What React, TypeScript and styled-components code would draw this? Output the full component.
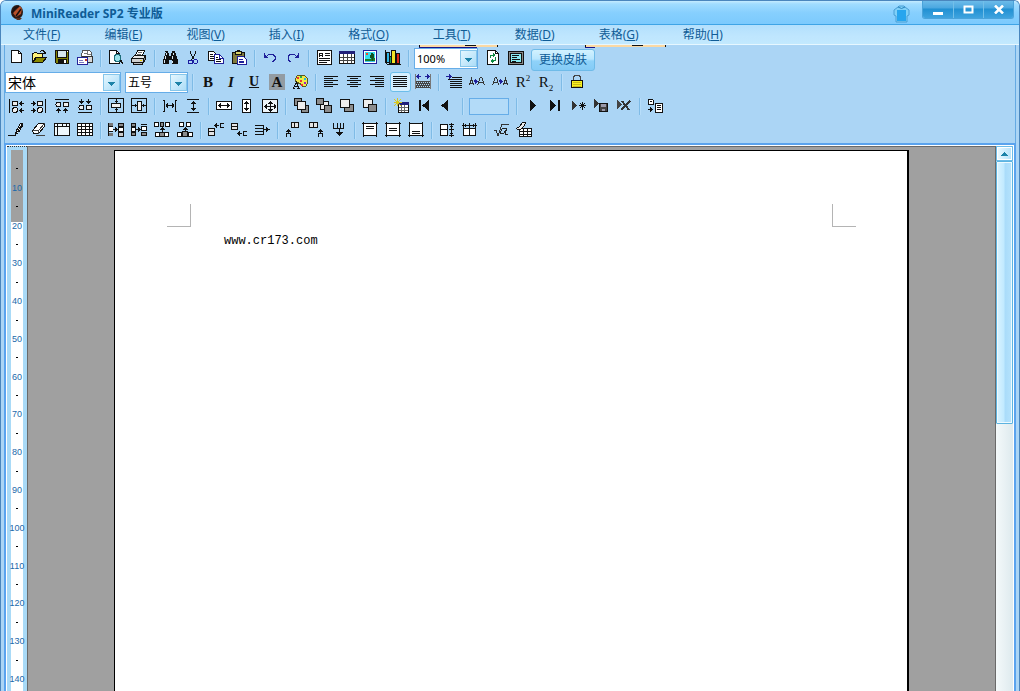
import React from "react";
import styled, { createGlobalStyle, css } from "styled-components";

const ui = `"Noto Sans", "Noto Sans CJK SC", sans-serif`;
const ink = "#0f5c96";

const GlobalStyle = createGlobalStyle`
  *, *::before, *::after { box-sizing: border-box; }
  body { margin: 0; font-family: ${ui}; font-size: 12px; }
  button, select, input { font: inherit; margin: 0; padding: 0; }
`;

/* ---------- window chrome ---------- */

const Window = styled.div`
  display: flex;
  flex-direction: column;
  height: 100vh;
  overflow: hidden;
  background: #abd5f5;
  border: solid #4a86bd;
  border-width: 1px 1px 0;
  border-radius: 6px 6px 0 0;
`;

const TitleBar = styled.header`
  display: flex;
  align-items: flex-start;
  flex: none;
  height: 24px;
  padding: 0 5px 0 8px;
  background: linear-gradient(#c4ebff 0, #a0dcff 3px, #86cffe 12px, #7ccafd 100%);
  border-bottom: 1px solid #3fa4e6;
`;

const AppTitle = styled.h1`
  flex: 1;
  margin: 0 0 0 6px;
  font-size: 12px;
  line-height: 25px;
  font-weight: 700;
  color: ${ink};
`;

const SkinButton = styled.button`
  width: 17px;
  height: 20px;
  margin: 3px 12px 0 0;
  border: 0;
  background: none;
  svg { display: block; }
`;

const WindowButtons = styled.div`
  display: flex;
  height: 18px;
  border: 1px solid #4aa3da;
  border-top: 0;
  border-radius: 0 0 3px 3px;
  overflow: hidden;
`;

const WindowButton = styled.button`
  display: flex;
  align-items: center;
  justify-content: center;
  width: 30px;
  border: 0;
  border-left: 1px solid #73bfe8;
  background: linear-gradient(#6cbbe9 0, #4aa7e0 7px, #2190d2 8px, #3ea3df 100%);
  &:first-child { border-left: 0; }
`;

const MenuBar = styled.nav`
  display: flex;
  flex: none;
  gap: 44px;
  height: 20px;
  padding-left: 22px;
  background: linear-gradient(#b3e0fd, #bfe6fe 60%, #c2e9fe);
  border-bottom: 1px solid #e6f7ff;
`;

const MenuItem = styled.button`
  border: 0;
  background: none;
  color: ${ink};
  font-size: 12px;
  line-height: 20px;
  white-space: nowrap;
`;

/* ---------- toolbars ---------- */

const Toolbars = styled.div`
  position: relative;
  flex: none;
  margin: 0 3px;
  padding: 1px 0;
  border: solid #65aae3;
  border-width: 0 1px;
`;

const MenuShadow = styled.svg`
  position: absolute;
  left: 414px;
  top: 0;
`;

const ToolRow = styled.div`
  display: flex;
  align-items: center;
  height: 24px;
`;

const ToolButton = styled.button<{ $on?: boolean }>`
  display: flex;
  align-items: center;
  justify-content: center;
  flex: none;
  width: 23px;
  height: 20px;
  padding: 0 1px 0 0;
  border: 0;
  background: none;
  ${(p) =>
    p.$on &&
    css`
      background: #d5effe;
      box-shadow: inset 0 0 0 1px #6cbdea;
      border-radius: 3px;
      width: 21px;
      margin: 0 1px;
    `}
`;

const Divider = styled.span`
  flex: none;
  width: 2px;
  height: 17px;
  margin: 0 3px;
  background: #7fbbe6;
  border-right: 1px solid #b8defa;
`;

const Combo = styled.label<{ $width: number; $size: number }>`
  position: relative;
  flex: none;
  width: ${(p) => p.$width}px;
  height: 21px;
  margin-right: 4px;
  ${Divider} + & { margin-left: 1px; }
  & + & { margin: 0 1px 0 0; }
  select {
    appearance: none;
    display: block;
    width: 100%;
    height: 100%;
    padding-left: 2px;
    border: 1px solid #66ade8;
    border-radius: 0;
    background: #fff;
    color: #000;
    font-size: ${(p) => p.$size}px;
    line-height: 19px;
  }
`;

const ComboArrow = styled.svg`
  position: absolute;
  right: 1px;
  top: 2px;
  pointer-events: none;
`;

const RecordField = styled.input`
  width: 40px;
  height: 17px;
  margin: 0 4px 0 2px;
  border: 1px solid #66ade8;
  background: #b3dbf8;
`;

const SwapSkin = styled.button`
  width: 64px;
  height: 22px;
  margin: 3px 0 0 3px;
  border: 1px solid #6fbbe8;
  border-radius: 3px;
  background: linear-gradient(#d2f2ff 0, #b9e6fe 45%, #8fd2f9 55%, #84cbf6 100%);
  color: #0f5c96;
  font-size: 12px;
  line-height: 20px;
`;

const Letter = styled.span<{
  $size: number;
  $bold?: boolean;
  $italic?: boolean;
  $underline?: boolean;
  $shaded?: boolean;
}>`
  font-family: "Liberation Serif", serif;
  font-size: ${(p) => p.$size}px;
  line-height: 16px;
  font-weight: ${(p) => (p.$bold ? 700 : 400)};
  font-style: ${(p) => (p.$italic ? "italic" : "normal")};
  text-decoration: ${(p) => (p.$underline ? "underline" : "none")};
  color: #111;
  white-space: nowrap;
  ${(p) =>
    p.$shaded &&
    css`
      width: 16px;
      text-align: center;
      background: #939ca3;
    `}
  sup, sub { font-size: 9px; line-height: 0; }
`;

/* ---------- workspace ---------- */

const Frame = styled.main`
  display: flex;
  flex: 1;
  min-height: 0;
  margin: 0 3px;
  border: solid #5aa3ee;
  border-width: 2px 2px 0;
`;

const Inner = styled.div`
  display: flex;
  flex: 1;
  min-width: 0;
  border: solid #fff;
  border-width: 1px 1px 0;
`;

const Ruler = styled.aside`
  flex: none;
  width: 20px;
  overflow: hidden;
  padding: 3px 4px 0;
  background: #a9daf7;
  border-top: 1px dotted #333;
`;

const RulerScale = styled.div`
  height: 297mm;
  padding-top: calc(5mm / 2);
  background: linear-gradient(#a0a0a0 72px, #fff 72px);
`;

const Tick = styled.div`
  display: flex;
  align-items: center;
  justify-content: center;
  height: 5mm;
  font-family: "Liberation Sans", sans-serif;
  font-size: 9px;
  color: #1b69ab;
`;

const Dash = styled.i`
  width: 2px;
  height: 1px;
  background: #000;
`;

const Desk = styled.section`
  flex: 1;
  min-width: 0;
  overflow: hidden;
  padding-top: 3px;
  background: #a0a0a0;
  border: solid #6a6a6a;
  border-width: 1px 1px 0;
`;

const Paper = styled.article`
  width: 795px;
  height: 297mm;
  margin: 0 auto;
  background: #fff;
  border: 1px solid #000;
  border-right-width: 2px;
`;

const Margins = styled.div`
  display: flex;
  justify-content: space-between;
  padding: 53px 51px 0 52px;
`;

const Corner = styled.span<{ $side: "left" | "right" }>`
  width: 24px;
  height: 23px;
  border-bottom: 1px solid #b4b4b4;
  ${(p) => (p.$side === "left" ? "border-right" : "border-left")}: 1px solid #b4b4b4;
`;

const Body = styled.p`
  margin: 6px 109px;
  font-family: "Liberation Mono", monospace;
  font-size: 12px;
  line-height: 16px;
  color: #000;
`;

const ScrollBar = styled.div`
  display: flex;
  flex-direction: column;
  flex: none;
  width: 17px;
  background: linear-gradient(90deg, #f4f9fa, #deeaee);
`;

const ScrollUp = styled.button`
  display: flex;
  align-items: center;
  justify-content: center;
  height: 15px;
  border: 1px solid #6cbce8;
  background: linear-gradient(90deg, #eefaff, #b4e2fa);
  box-shadow: inset 0 0 0 1px #fff;
`;

const ScrollThumb = styled.div`
  height: 263px;
  border: 1px solid #5cb3e0;
  border-radius: 1px;
  background: linear-gradient(90deg, #d9f3ff 0, #c2eaff 45%, #aadcfa 55%, #b5e3fd 100%);
  box-shadow: inset 0 0 0 1px #eefaff;
`;

/* ---------- icons, drawn on a 16 x 16 pixel grid ---------- */

const L = ({ d, s = "#111" }: { d: string; s?: string }) => <path d={d} fill="none" stroke={s} />;
const F = ({ d, f = "#111" }: { d: string; f?: string }) => <path d={d} fill={f} />;
const B = ({ d, f = "#fff", s = "#111" }: { d: string; f?: string; s?: string }) => (
  <path d={d} fill={f} stroke={s} />
);

const ARL = (x: number, y: number) => `M${x} ${y}h1v-1h1v-1h1v2h2v1h-2v2h-1v-1h-1v-1h-1z`;
const ARR = (x: number, y: number) => `M${x} ${y}h2v-2h1v1h1v1h1v1h-1v1h-1v1h-1v-2h-2z`;
const ARU = (x: number, y: number) => `M${x} ${y}v1h-1v1h-1v1h2v2h1v-2h2v-1h-1v-1h-1v-1z`;
const ARD = (x: number, y: number) => `M${x} ${y}v2h-2v1h1v1h1v1h1v-1h1v-1h1v-1h-2v-2z`;
const PLAY = (x: number, y: number, h = 5) => `M${x} ${y - h}l${h + 1} ${h + 0.5}l-${h + 1} ${h + 0.5}z`;
const blocks = "#8c8c8c";

const icons: Record<string, React.ReactNode> = {
  newDoc: <><B d="M3.5 .5h7l3 3v9h-10z" /><L d="M10.5 .5v3h3" /></>,
  open: <><B d="M1.5 12.5v-9h1l1-1h2l1 1h5v4h-7z" f="#fdf37a" /><B d="M1.5 12.5l4-5h10l-4 5z" f="#8a8a00" /><L d="M9 1.5l2-1h1l2 2v1M11.5 3.5h3v-2" /></>,
  save: <><B d="M1.5 .5h13v13h-12l-1-1z" f="#808000" /><F d="M4 1h9v6h-9z" f="#d6e6ee" /><L d="M3.5 1v6.5h9v-6.5" /><F d="M4 9h9v5h-9z" /><F d="M10 10h2v3h-2z" f="#fff" /><F d="M13 1h1v1h-1z" f="#fff" /></>,
  mail: <><B d="M4.5 5.5l1-5h7l2 2v7h-9z" s="#555" /><L d="M10.5 1v3h3M7 3.5h3" s="#777" /><B d="M5.5 6.5h10v6h-10z" f="#d9d9d9" s="#333" /><B d="M.5 7.5h10v7h-10z" s="#26269a" /><L d="M2 10.5h4M2 12.5h5" s="#7a7ac0" /><F d="M8 9h2v2h-2z" f="#c0392b" /></>,
  preview: <><B d="M1.5 .5h7l3 3v10h-10z" /><L d="M8.5 .5v3h3" /><circle cx="9.5" cy="8" r="3.5" fill="#9be3ea" stroke="#1c6c78" /><L d="M12 10.5l3 3.5M12.5 10l3 3.5" /></>,
  print: <><B d="M4.5 5.5l2-5h7l-2 5z" /><L d="M7 2.5h4M6 4.5h4" s="#666" /><B d="M.5 8.5l3-3h11l-2 3z" f="#e8e8e8" /><B d="M.5 8.5h12v4h-12z" f="#d0d0d0" /><B d="M12.5 8.5l2-3v4l-2 3z" f="#888" /><F d="M9 10h2v1h-2z" f="#e4d000" /><B d="M2.5 12.5h9v2h-9z" f="#bbb" /></>,
  find: <><F d="M3 1h3v2h1v3h2v-3h1v-2h3v2h1v3h1v3h1v5h-6v-4h-3v4h-6v-5h1v-3h1v-3h1z" /><L d="M4.5 3v2M3.5 6v3M2.5 10v3M11.5 3v2M10.5 6v3M10.5 11v2" s="#d9e8f2" /></>,
  cut: <><L d="M5.5 1v2l1 2 1 2 2 3M10.5 1v2l-1 2-1 2-2 3" /><circle cx="5.5" cy="12" r="2" fill="none" stroke="#1c1ca0" /><circle cx="10.5" cy="11.5" r="2" fill="none" stroke="#1c1ca0" /></>,
  copy: <><B d="M.5 1.5h5l3 3v6h-8z" /><L d="M2 4.5h3M2 6.5h5M2 8.5h5" /><B d="M6.5 4.5h5l4 4v5h-9z" s="#20209a" /><L d="M11.5 4.5v4h4" s="#20209a" /><L d="M8 7.5h2M8 9.5h5M8 11.5h5" /></>,
  paste: <><B d="M1.5 2.5h12v11h-12z" f="#807a3c" /><B d="M4.5 1.5h6v3h-6z" f="#d8d16a" /><F d="M6 0h3v2h-3z" /><B d="M6.5 6.5h6l3 3v5h-9z" s="#20209a" /><L d="M8 9.5h4M8 11.5h5M8 12.5h5" s="#20209a" /></>,
  undo: <><L d="M4 6.5l3-2h4l2 2v3l-2 2h-1" s="#20209a" /><F d="M2 3h1v2h1v1h1v1h1v1h-4z" f="#20209a" /></>,
  redo: <><L d="M12 6.5l-3-2h-4l-2 2v3l2 2h1" s="#20209a" /><F d="M14 3h-1v2h-1v1h-1v1h-1v1h4z" f="#20209a" /></>,
  textFrame: <><B d="M1.5 .5h14v14h-14z" /><L d="M3.5 7v-3l1-1h1l1 1v3M4 5.5h3M9 3.5h5M9 5.5h5M3 8.5h11M3 10.5h11M3 12.5h8" /></>,
  table: <><B d="M.5 1.5h15v12h-15z" /><F d="M0 1h16v3h-16z" f="#20207a" /><L d="M1 7.5h14M1 10.5h14M4.5 4v9M8.5 4v9M12.5 4v9" s="#444" /></>,
  picture: <><B d="M1.5 .5h13v13h-13z" s="#20209a" /><F d="M3 2h10v10h-10z" f="#35dcec" /><F d="M3 9h4l3-1h3v4h-10z" f="#187a28" /><F d="M9 3h2v1h1v4h-1v3h-1v-3h-2v-3h1z" f="#0f5120" /><F d="M4 3h2v2h-2z" f="#f04028" /><L d="M3 11.5h10" s="#40c8f0" /></>,
  chart: <><B d="M1.5 2.5h3v10h-3z" f="#2fb6e8" /><B d="M4.5 6.5h2v7h-2z" f="#18a058" /><B d="M6.5 .5h4v13h-4z" f="#f2e326" /><B d="M11.5 3.5h3v10h-3z" f="#e02818" /><L d="M.5 0v12.5l2 2h13" /></>,
  refresh: <><B d="M2.5 .5h8l3 3v11h-11z" /><L d="M10.5 .5v3h3" /><L d="M5.5 8v-2l2-1h2M10.5 7v3l-2 1h-2" s="#0f8a42" /><F d="M8 3l3 2-3 2zM8 9l-3 2 3 2z" f="#0f8a42" /></>,
  fullScreen: <><B d="M.5 1.5h15v13h-15z" f="#888" /><B d="M2.5 3.5h11v9h-11z" f="#8ae9f2" /><L d="M4 5.5h7M4 7.5h5M4 9.5h8M4 11.5h4" /></>,
  palette: <><B d="M3.5 7.5v-3l2-3h7l3 3v5l-2 3h-3l-1-2-2-1z" f="#f2ea4a" s="#5a5620" /><F d="M5 3h2v2h-2zM9 10h2v2h-2z" f="#e33" /><F d="M8 2h2v2h-2z" f="#2aa84a" /><F d="M12 4h2v2h-2z" f="#28b8e0" /><F d="M12 8h2v2h-2z" f="#a020c0" /><F d="M8 6h2v2h-2z" f="#e33" /><L d="M.5 14.5h2M1.5 14l3-6 2 6M3 12.5h3M5 14.5h3" /></>,
  alignLeft: <L d="M1 2.5h14M1 4.5h9M1 6.5h14M1 8.5h9M1 10.5h14M1 12.5h9" />,
  alignCenter: <L d="M1 2.5h14M4 4.5h8M1 6.5h14M4 8.5h8M1 10.5h14M4 12.5h8" />,
  alignRight: <L d="M1 2.5h14M6 4.5h9M1 6.5h14M6 8.5h9M1 10.5h14M6 12.5h9" />,
  justify: <L d="M1 2.5h14M1 4.5h14M1 6.5h14M1 8.5h14M1 10.5h14M1 12.5h14" />,
  distribute: <><L d="M.5 0v15M15.5 0v15" s="#777" /><L d="M1 7.5h14M1 9.5h14M1 11.5h14M1 13.5h14" s="#444" /><path d="M1 8.5h14M2 10.5h13M1 12.5h14" stroke="#444" strokeDasharray="1 1" /><L d="M2 2.5h4M10 2.5h4" s="#20209a" /><F d="M1 2.5l3-2.5v5zM15 2.5l-3-2.5v5z" f="#20209a" /></>,
  indent: <><L d="M6 3.5h10M2 5.5h14M4 7.5h12M4 9.5h12M4 11.5h12M4 13.5h12" /><F d="M0 2h3v-2l3 2.5-3 2.5v-2h-3z" f="#20209a" /></>,
  growFont: <><L d="M.5 11l2-6 2 6M1 9.5h3M8.5 11l3-8h1l3 8M10 8.5h4" s="#333" /><F d="M5 6h1v-1l3 2.5-3 2.5v-2h-1z" f="#20209a" /></>,
  shrinkFont: <><L d="M.5 11l3-8h1l2 8M2 8.5h4M11.5 11l2-6 2 6M12 9.5h3" s="#333" /><F d="M7 6h1v-1l3 2.5-3 2.5v-2h-1z" f="#20209a" /></>,
  lock: <><L d="M4.5 7v-4l2-2h3l2 2v4" s="#444" /><B d="M2.5 6.5h11v7h-11z" f="#f8f020" /><L d="M4 8.5h8M4 10.5h8M4 12.5h8" s="#c8bc18" /></>,

  groupLeft: <><L d="M1.5 1v14" /><B d="M4.5 3.5h5v4h-5z" f="#eee" /><circle cx="7" cy="12" r="2.5" fill="#eee" stroke="#111" /><F d={ARL(11, 5)} /><F d={ARL(11, 12)} /></>,
  groupRight: <><L d="M14.5 1v14" /><B d="M6.5 3.5h5v4h-5z" f="#eee" /><circle cx="9" cy="12" r="2.5" fill="#eee" stroke="#111" /><F d={ARR(0, 5)} /><F d={ARR(0, 12)} /></>,
  groupTop: <><L d="M1 1.5h14" /><circle cx="4.5" cy="6.5" r="2.5" fill="#eee" stroke="#111" /><B d="M9.5 4.5h5v4h-5z" f="#eee" /><F d={ARU(4, 10)} /><F d={ARU(11, 10)} /></>,
  groupBottom: <><L d="M1 14.5h14" /><circle cx="4.5" cy="9.5" r="2.5" fill="#eee" stroke="#111" /><B d="M9.5 7.5h5v4h-5z" f="#eee" /><F d={ARD(4, 1)} /><F d={ARD(11, 1)} /></>,
  midVertical: <><L d="M.5 .5h15v14h-15z" /><B d="M3.5 5.5h9v4h-9z" f="#eee" /><F d="M8 1h1v4h-1zM8 10h1v4h-1zM7 3h3v1h-3zM7 11h3v1h-3z" /></>,
  midHorizontal: <><L d="M.5 .5h15v14h-15z" /><B d="M6.5 3.5h4v9h-4z" f="#eee" /><F d="M1 7h5v1h-5zM11 7h4v1h-4zM4 6h1v3h-1zM12 6h1v3h-1z" /></>,
  gapH: <><L d="M1 2.5h1.5v11h-1.5M15 2.5h-1.5v11h1.5" /><L d="M4 7.5h8M5.5 5v5M4.5 6v3M10.5 5v5M11.5 6v3" /></>,
  gapV: <L d="M2 1.5h12M2 14.5h12M8.5 3v10M7 4.5h3M6 5.5h5M6 10.5h5M7 11.5h3" />,
  sameW: <><B d="M.5 3.5h15v8h-15z" /><L d="M2 7.5h12M4.5 5v5M11.5 5v5M3.5 6v3M12.5 6v3" /></>,
  sameH: <><B d="M3.5 1.5h8v13h-8z" /><L d="M7.5 3v10M5 5.5h5M6 4.5h3M5 10.5h5M6 11.5h3" /></>,
  sameWH: <><B d="M.5 1.5h15v13h-15z" f="#eef4f8" /><L d="M2 8.5h12M8.5 3v11M3.5 7v3M4.5 6v5M13.5 7v3M12.5 6v5M7 4.5h3M6 5.5h5M7 12.5h3M6 11.5h5" /></>,
  toFront: <><B d="M1.5 .5h7v7h-7z" f={blocks} /><B d="M8.5 7.5h7v7h-7z" f={blocks} /><B d="M4.5 3.5h8v8h-8z" f="#eee" /></>,
  toBack: <><B d="M4.5 3.5h8v8h-8z" f="#eee" /><B d="M.5 .5h7v6h-7z" f={blocks} /><B d="M8.5 7.5h7v7h-7z" f={blocks} /></>,
  forward: <><B d="M5.5 6.5h9v7h-9z" f={blocks} /><B d="M1.5 1.5h9v8h-9z" f="#eee" /></>,
  backward: <><B d="M1.5 1.5h9v8h-9z" f="#eee" /><B d="M6.5 6.5h8v7h-8z" f={blocks} /></>,
  newData: <><B d="M5.5 5.5h10v9h-10z" /><F d="M5 4h11v3h-11z" f="#20207a" /><L d="M6 9.5h9M6 12.5h9M8.5 7v7M11.5 7v7" s="#666" /><L d="M4.5 0v8M.5 4.5h8M1 1l7 7M8 1l-7 7" s="#d8c820" /></>,
  first: <><F d="M3 2h2v11h-2z" /><F d="M13 2v11l-7-5.5z" /></>,
  prev: <F d="M9 2v11l-7-5.5z" />,
  next: <F d={PLAY(6, 7, 5)} />,
  last: <><F d={PLAY(3, 7, 5)} /><F d="M11 2h2v11h-2z" /></>,
  addRec: <><F d={PLAY(2, 7, 4)} f="#333" /><L d="M12.5 4v8M8.5 7.5h8M10 5l5 5M15 5l-5 5" /></>,
  saveRec: <><F d={PLAY(1, 5, 4)} f="#333" /><B d="M6.5 5.5h8v8h-8z" f="#444" /><F d="M8 6h5v3h-5zM9 11h3v2h-3z" f="#99a" /></>,
  cancelRec: <><F d={PLAY(1, 6, 4)} f="#444" /><path d="M5 12l9-9M6 3l7 9" stroke="#333" strokeWidth="2" fill="none" /></>,
  exportRec: <><B d="M1.5 1.5h4l1 1v4h-5z" /><L d="M3 3.5h2" /><B d="M8.5 5.5h7v9h-7z" /><L d="M10 7.5h4M10 9.5h4M10 11.5h4" /><F d={ARR(1, 11)} /></>,

  pen: <><B d="M8.5 8.5l4-7h2v2l-4 7-3 2z" f="#f4f4f4" /><L d="M13.5 1v2l-4 7" /><L d="M0 13.5h7l1-2" /></>,
  eraser: <><B d="M1.5 8.5l6-7h6v3l-6 7h-5z" /><L d="M1.5 8.5h6l6-7M7.5 8.5v3M5 13.5h9" s="#444" /></>,
  frameTable: <><B d="M.5 1.5h15v12h-15z" f="#eef7fc" /><L d="M1 4.5h14M3.5 2v11M8.5 2v2M12.5 2v2" /></>,
  grid: <><B d="M.5 1.5h15v12h-15z" /><L d="M1 4.5h14M1 7.5h14M1 10.5h14M4.5 2v11M8.5 2v11M12.5 2v11" /></>,
  colInsL: <><F d="M0 1h5v3h-5zM0 11h5v3h-5z" f="#777" /><F d="M0 5h5v4h-5z" f="#fff" /><L d="M.5 1v13M1 4.5h4M1 9.5h4" /><B d="M10.5 1.5h5v3h-5z" f={blocks} /><B d="M10.5 5.5h5v4h-5z" /><B d="M10.5 10.5h5v4h-5z" f="#ccc" /><F d={ARR(5, 7)} /></>,
  colInsR: <><B d="M.5 1.5h4v3h-4z" f={blocks} /><B d="M.5 5.5h4v4h-4z" /><B d="M.5 10.5h4v3h-4z" f={blocks} /><B d="M10.5 4.5h5v4h-5z" /><B d="M10.5 10.5h5v3h-5z" f={blocks} /><F d={ARR(5, 7)} /><L d="M10 2.5h6" /></>,
  rowInsT: <><B d="M.5 .5h4v4h-4zM11.5 .5h4v4h-4z" /><B d="M6.5 .5h3v4h-3z" f={blocks} /><F d={ARU(8, 5)} /><B d="M1.5 10.5h4v4h-4zM10.5 10.5h4v4h-4z" /><B d="M5.5 10.5h5v4h-5z" f={blocks} /></>,
  rowInsB: <><B d="M2.5 .5h4v4h-4zM9.5 .5h4v4h-4z" /><F d={ARU(8, 5)} /><B d="M.5 10.5h4v4h-4zM11.5 10.5h4v4h-4z" /><B d="M5.5 9.5h5v5h-5z" f={blocks} /></>,
  cellA: <><B d="M.5 6.5h6v3h-6zM.5 9.5h6v4h-6z" f="#e4e4e4" /><F d={ARL(6, 3)} /><L d="M16 1.5h-4v4h4" /></>,
  cellB: <><B d="M.5 1.5h6v3h-6zM.5 4.5h6v3h-6z" f="#e4e4e4" /><F d={ARL(6, 11)} /><L d="M16 9.5h-4v4h4" /></>,
  cellC: <><L d="M1 3.5h8v3h-8M1 9.5h8v3h-8M9.5 6v4" /><L d="M9 7.5h4" /><F d="M12 5l4 2.5-4 2.5z" /></>,
  cellD: <><B d="M6.5 .5h3v5h-3zM9.5 .5h4v5h-4z" f="#e4e4e4" /><F d={ARU(3, 7)} /><L d="M1.5 15v-4h4v4" /></>,
  cellE: <><B d="M1.5 .5h4v5h-4zM5.5 .5h4v5h-4z" f="#e4e4e4" /><F d={ARU(12, 7)} /><L d="M10.5 15v-4h4v4" /></>,
  cellF: <><L d="M2.5 1v5h4v-5M9.5 1v5h3v-5M8.5 6v6M6.5 6.5h4" /><F d="M5 10h7l-3.5 4z" /></>,
  cellTop: <><B d="M1.5 1.5h13v12h-13z" /><L d="M0 1.5h16M1.5 0v15M14.5 0v15M4 4.5h8M4 6.5h8" /></>,
  cellMid: <><B d="M1.5 1.5h13v12h-13z" /><L d="M0 1.5h16M0 13.5h16M1.5 0v15M14.5 0v15M4 6.5h8M4 8.5h8" /></>,
  cellBottom: <><B d="M1.5 1.5h13v12h-13z" /><L d="M0 13.5h16M1.5 0v15M14.5 0v15M4 9.5h8M4 11.5h8" /></>,
  evenRows: <><B d="M1.5 2.5h7v5h-7zM1.5 7.5h7v6h-7z" /><L d="M12.5 1v14M10 2.5h5M10 7.5h5M10 13.5h5M11 4.5h3M11 11.5h3" /></>,
  evenCols: <><B d="M1.5 13.5v-7h6v7zM7.5 13.5v-7h6v7z" /><L d="M0 3.5h15M1.5 1v5M7.5 1v5M13.5 1v5M3.5 2v3M11.5 2v3" /></>,
  formula: <><L d="M1 8.5h2l2 5 4-11h7" s="#333" /><L d="M13.5 6l-1 6h2M12.5 6.5h-3l-2 3v2h3l2-3" s="#222" /></>,
  editTable: <><B d="M3.5 6.5h12v8h-12z" /><L d="M4 9.5h12M4 12.5h12M7.5 7v7M11.5 7v7" /><B d="M.5 6.5l3-2 3-4h3l-1 3-4 4h-3z" f="#eee" /></>,
};

const Icon = ({ name }: { name: string }) => (
  <svg width="16" height="16" viewBox="0 0 16 16" shapeRendering="crispEdges" aria-hidden="true">
    {icons[name]}
  </svg>
);

const Group = ({ names, on }: { names: string[]; on?: string }) => (
  <>
    {names.map((n) => (
      <ToolButton key={n} type="button" aria-label={n} $on={n === on}>
        <Icon name={n} />
      </ToolButton>
    ))}
  </>
);

/* Each inner list is one group of buttons; neighbouring groups are parted by a divider. */
const Groups = ({ groups }: { groups: string[][] }) => (
  <>
    {groups.map((g, i) => (
      <React.Fragment key={i}>
        {i > 0 && <Divider />}
        <Group names={g} />
      </React.Fragment>
    ))}
  </>
);

const Select = ({ label, value, width, size }: { label: string; value: string; width: number; size: number }) => (
  <Combo $width={width} $size={size}>
    <select aria-label={label} defaultValue={value}>
      <option>{value}</option>
    </select>
    <ComboArrow width="17" height="17" viewBox="0 0 17 17" shapeRendering="crispEdges">
      <defs>
        <linearGradient id="arrowFace" x1="0" y1="0" x2="1" y2="1">
          <stop offset="0" stopColor="#e6f8ff" />
          <stop offset="1" stopColor="#a9dbf7" />
        </linearGradient>
      </defs>
      <path d="M.5 .5h16v16h-16z" fill="url(#arrowFace)" stroke="#86c6ea" />
      <path d="M5 8h7l-3.5 4z" fill="#1d83a8" />
    </ComboArrow>
  </Combo>
);

const menus: [string, string][] = [
  ["文件", "F"], ["编辑", "E"], ["视图", "V"], ["插入", "I"], ["格式", "O"],
  ["工具", "T"], ["数据", "D"], ["表格", "G"], ["帮助", "H"],
];

const ticks = Array.from({ length: 29 }, (_, i) => i + 1);

export default function App() {
  return (
    <>
      <GlobalStyle />
      <Window>
        <TitleBar>
          <svg width="16" height="22" viewBox="0 0 16 22" aria-hidden="true">
            <ellipse cx="8" cy="11" rx="6" ry="7" fill="#2c1a14" />
            <path d="M4 12l7-7 2 3-1 5-5 3z" fill="#b8512a" />
            <path d="M3 12l3-5 4-2M7 15l5-7" stroke="#1a1110" strokeWidth="1.5" fill="none" />
            <path d="M6 17h7l-2 2h-3z" fill="#5a3020" />
          </svg>
          <AppTitle>MiniReader SP2 专业版</AppTitle>
          <SkinButton type="button" aria-label="skin">
            <svg width="17" height="20" viewBox="0 0 17 20">
              <path d="M5 3l-4 3v5l2 1v6h11v-6l2-1v-5l-4-3-1-1h-5z" fill="#7fd0f8" stroke="#4a9ed4" />
              <path d="M4 6h9v11h-9z" fill="#27a5ee" />
              <path d="M5 3q3.5 3 7 0" fill="none" stroke="#2a84bd" />
            </svg>
          </SkinButton>
          <WindowButtons>
            <WindowButton type="button" aria-label="minimize">
              <svg width="12" height="10"><path d="M1 7h10v3h-10z" fill="#fff" /></svg>
            </WindowButton>
            <WindowButton type="button" aria-label="maximize">
              <svg width="11" height="9"><path d="M1.5 1.5h8v6h-8z" fill="none" stroke="#fff" strokeWidth="2" /></svg>
            </WindowButton>
            <WindowButton type="button" aria-label="close">
              <svg width="10" height="9"><path d="M1 .5l8 8M9 .5l-8 8" stroke="#fff" strokeWidth="2.5" /></svg>
            </WindowButton>
          </WindowButtons>
        </TitleBar>

        <MenuBar>
          {menus.map(([text, key]) => (
            <MenuItem key={key} type="button">
              {text}(<u>{key}</u>)
            </MenuItem>
          ))}
        </MenuBar>

        <Toolbars>
          <MenuShadow width="250" height="3" shapeRendering="crispEdges" aria-hidden="true">
            <path d="M0 0h79v2h-79zM166 0h81v2h-81z" fill="#fbd9a4" />
            <path d="M46 0h11v1h-11zM213 0h11v1h-11zM0 0h1v2h-1zM78 0h1v2h-1zM166 0h1v2h-1zM246 0h1v2h-1z" fill="#111" />
            <path d="M0 2h58v1h-58zM166 2h10v1h-10z" fill="#16168c" />
          </MenuShadow>

          <ToolRow>
            <Groups
              groups={[
                ["newDoc", "open", "save", "mail"],
                ["preview", "print"],
                ["find", "cut", "copy", "paste"],
                ["undo", "redo"],
                ["textFrame", "table", "picture", "chart"],
              ]}
            />
            <Divider />
            <Select label="zoom" value="100%" width={64} size={11} />
            <Group names={["refresh", "fullScreen"]} />
            <SwapSkin type="button">更换皮肤</SwapSkin>
          </ToolRow>

          <ToolRow>
            <Select label="font" value="宋体" width={116} size={14} />
            <Select label="size" value="五号" width={63} size={12} />
            <Divider />
            <ToolButton type="button"><Letter $size={15} $bold>B</Letter></ToolButton>
            <ToolButton type="button"><Letter $size={15} $bold $italic>I</Letter></ToolButton>
            <ToolButton type="button"><Letter $size={14} $bold $underline>U</Letter></ToolButton>
            <ToolButton type="button"><Letter $size={15} $bold $shaded>A</Letter></ToolButton>
            <Group names={["palette"]} />
            <Divider />
            <Group names={["alignLeft", "alignCenter", "alignRight", "justify", "distribute"]} on="justify" />
            <Divider />
            <Group names={["indent", "growFont", "shrinkFont"]} />
            <ToolButton type="button"><Letter $size={15}>R<sup>2</sup></Letter></ToolButton>
            <ToolButton type="button"><Letter $size={15}>R<sub>2</sub></Letter></ToolButton>
            <Divider />
            <Group names={["lock"]} />
          </ToolRow>

          <ToolRow>
            <Groups
              groups={[
                ["groupLeft", "groupRight", "groupTop", "groupBottom"],
                ["midVertical", "midHorizontal"],
                ["gapH", "gapV"],
                ["sameW", "sameH", "sameWH"],
                ["toFront", "toBack", "forward", "backward"],
                ["newData", "first", "prev"],
              ]}
            />
            <Divider />
            <RecordField aria-label="record" />
            <Divider />
            <Groups groups={[["next", "last", "addRec", "saveRec", "cancelRec"], ["exportRec"]]} />
          </ToolRow>

          <ToolRow>
            <Groups
              groups={[
                ["pen", "eraser", "frameTable", "grid"],
                ["colInsL", "colInsR", "rowInsT", "rowInsB"],
                ["cellA", "cellB", "cellC"],
                ["cellD", "cellE", "cellF"],
                ["cellTop", "cellMid", "cellBottom"],
                ["evenRows", "evenCols"],
                ["formula", "editTable"],
              ]}
            />
          </ToolRow>
        </Toolbars>

        <Frame>
          <Inner>
            <Ruler>
              <RulerScale>
                {ticks.map((t) => (
                  <Tick key={t}>{t % 2 ? <Dash /> : t * 5}</Tick>
                ))}
              </RulerScale>
            </Ruler>
            <Desk>
              <Paper>
                <Margins>
                  <Corner $side="left" />
                  <Corner $side="right" />
                </Margins>
                <Body>www.cr173.com</Body>
              </Paper>
            </Desk>
            <ScrollBar>
              <ScrollUp type="button" aria-label="scroll up">
                <svg width="7" height="4" shapeRendering="crispEdges"><path d="M0 4l3.5-4 3.5 4z" fill="#1d83a8" /></svg>
              </ScrollUp>
              <ScrollThumb />
            </ScrollBar>
          </Inner>
        </Frame>
      </Window>
    </>
  );
}
